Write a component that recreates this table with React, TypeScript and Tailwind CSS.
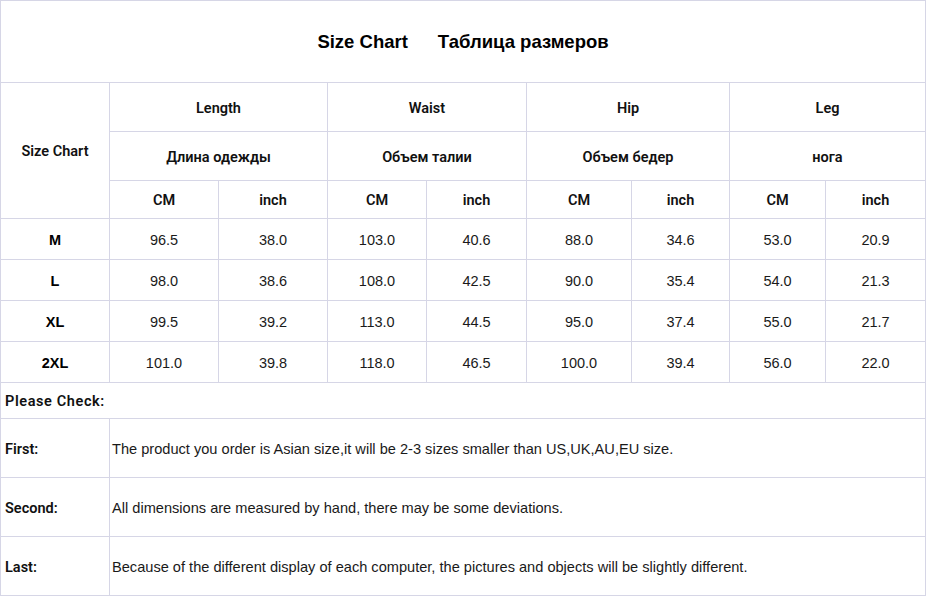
import React from 'react';

const cols = [109, 109, 109, 99, 100, 105, 98, 96, 100];

const groups = [
    { en: 'Length', ru: 'Длина одежды' },
    { en: 'Waist', ru: 'Объем талии' },
    { en: 'Hip', ru: 'Объем бедер' },
    { en: 'Leg', ru: 'нога' },
];

const rows = [
    { size: 'M', values: ['96.5', '38.0', '103.0', '40.6', '88.0', '34.6', '53.0', '20.9'] },
    { size: 'L', values: ['98.0', '38.6', '108.0', '42.5', '90.0', '35.4', '54.0', '21.3'] },
    { size: 'XL', values: ['99.5', '39.2', '113.0', '44.5', '95.0', '37.4', '55.0', '21.7'] },
    { size: '2XL', values: ['101.0', '39.8', '118.0', '46.5', '100.0', '39.4', '56.0', '22.0'] },
];

const notes = [
    { label: 'First:', text: 'The product you order is Asian size,it will be 2-3 sizes smaller than US,UK,AU,EU size.' },
    { label: 'Second:', text: 'All dimensions are measured by hand, there may be some deviations.' },
    { label: 'Last:', text: 'Because of the different display of each computer, the pictures and objects will be slightly different.' },
];

const cell = 'border border-[#d6d6e6] p-0 pt-[3px]';
const din = "font-['Roboto',sans-serif] font-semibold text-[14.5px] text-[#111]";
const arial = "font-['Liberation_Sans',Arial,sans-serif]";

export default function App() {
    return (
        <div className="bg-white w-[926px] h-[596px] overflow-hidden">
            <table className="table-fixed border-collapse w-[925px] text-center">
                <colgroup>
                    {cols.map((w, i) => (
                        <col key={i} style={{ width: w }} />
                    ))}
                </colgroup>
                <tbody>
                    <tr className="h-[82px]">
                        <td colSpan={9} className="border border-[#d6d6e6] p-0">
                            <div className={`${arial} font-bold text-[18.5px] text-black flex justify-center gap-[30px]`}>
                                <span>Size Chart</span>
                                <span>Таблица размеров</span>
                            </div>
                        </td>
                    </tr>
                    <tr className="h-[49px]">
                        <td rowSpan={3} className={`${cell} ${din}`}>Size Chart</td>
                        {groups.map((g) => (
                            <td key={g.en} colSpan={2} className={`${cell} ${din}`}>{g.en}</td>
                        ))}
                    </tr>
                    <tr className="h-[49px]">
                        {groups.map((g) => (
                            <td key={g.ru} colSpan={2} className={`${cell} ${din}`}>{g.ru}</td>
                        ))}
                    </tr>
                    <tr className="h-[38px]">
                        {groups.map((g) => (
                            <React.Fragment key={g.en}>
                                <td className={`${cell} ${din}`}>CM</td>
                                <td className={`${cell} ${din}`}>inch</td>
                            </React.Fragment>
                        ))}
                    </tr>
                    {rows.map((r) => (
                        <tr key={r.size} className="h-[41px]">
                            <td className={`${cell} ${arial} font-bold text-[14.5px] text-black`}>{r.size}</td>
                            {r.values.map((v, i) => (
                                <td key={i} className={`${cell} ${arial} text-[14.5px] text-[#1a1a1a]`}>{v}</td>
                            ))}
                        </tr>
                    ))}
                    <tr className="h-[36px]">
                        <td colSpan={9} className={`${cell} ${din} text-left pl-[4px] tracking-[0.6px]`}>Please Check:</td>
                    </tr>
                    {notes.map((n) => (
                        <tr key={n.label} className="h-[59px]">
                            <td className={`${cell} ${din} text-left pl-[4px]`}>{n.label}</td>
                            <td colSpan={8} className={`${cell} ${arial} text-[14.6px] text-[#1a1a1a] text-left pl-[2px]`}>{n.text}</td>
                        </tr>
                    ))}
                </tbody>
            </table>
        </div>
    );
}
